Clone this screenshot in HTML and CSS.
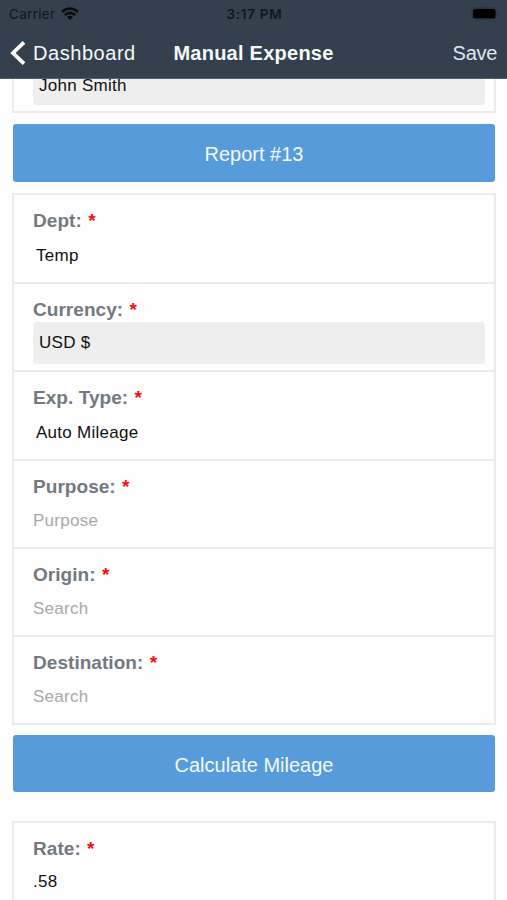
FILE: index.html
```html
<!DOCTYPE html>
<html lang="en">
<head>
<meta charset="utf-8">
<title>Manual Expense</title>
<link rel="stylesheet" href="styles.css">
</head>
<body>
<header class="header">
  <div class="status">
    <div class="carrier"><span>Carrier</span>
      <svg class="wifi" width="18" height="13" viewBox="0 0 18 13" fill="none" stroke="#080c10" stroke-width="2.6"><path d="M1 4.9Q9-1.9 17 4.9M3.8 8Q9 3.6 14.2 8"/><path d="M6 10Q9 7.6 12 10L9 12.9Z" fill="#080c10" stroke="none"/></svg>
    </div>
    <div class="time">3:17 PM</div>
    <svg class="battery" width="29" height="14" viewBox="0 0 29 14"><rect x=".5" y=".5" width="25" height="12" rx="4" fill="#293541" stroke="#2a3641"/><rect x="2" y="2" width="22.5" height="9.2" rx="2.5" fill="#000"/><path d="M27 4.5q1.8 2.2 0 4.2z" fill="#25303b"/></svg>
  </div>
  <nav class="nav">
    <a class="back"><svg width="16" height="24" viewBox="0 0 16 24" fill="none" stroke="#fff" stroke-width="3.8"><path d="M14 1.4 3 12 14 22.6"/></svg><span>Dashboard</span></a>
    <h1 class="title">Manual Expense</h1>
    <a class="save">Save</a>
  </nav>
</header>
<main class="content">
  <section class="card card-clipped">
    <div class="value filled">John Smith</div>
  </section>
  <button class="button">Report #13</button>
  <section class="card">
    <div class="row tall"><div class="label">Dept: <b>*</b></div><div class="value select">Temp</div></div>
    <div class="row"><div class="label">Currency: <b>*</b></div><div class="value filled">USD $</div></div>
    <div class="row tall"><div class="label">Exp. Type: <b>*</b></div><div class="value select">Auto Mileage</div></div>
    <div class="row"><div class="label">Purpose: <b>*</b></div><div class="value placeholder">Purpose</div></div>
    <div class="row"><div class="label">Origin: <b>*</b></div><div class="value placeholder">Search</div></div>
    <div class="row"><div class="label">Destination: <b>*</b></div><div class="value placeholder">Search</div></div>
  </section>
  <button class="button">Calculate Mileage</button>
  <section class="card card-rate">
    <div class="row"><div class="label">Rate: <b>*</b></div><div class="value">.58</div></div>
  </section>
</main>
</body>
</html>
```
FILE: styles.css
```css
* { box-sizing: border-box; }
body {
  margin: 0;
  height: 900px;
  overflow: hidden;
  background: #fefefe;
  color: #111;
  font-family: "Liberation Sans", Arial, sans-serif;
}
.header {
  height: 79px;
  background: #34404d;
  border-bottom: 1px solid #51606d;
}
.status {
  display: grid;
  grid-template-columns: 1fr auto 1fr;
  align-items: center;
  height: 27px;
  padding: 1px 7px 0 9px;
  font: 400 13.5px/26px Inter, sans-serif;
  color: #10161d;
}
.carrier { display: flex; align-items: center; gap: 6px; letter-spacing: .3px; }
.wifi { margin-top: -2px; }
.time { font-weight: 600; letter-spacing: .7px; }
.battery { justify-self: end; margin-top: -1px; }
.nav {
  display: grid;
  grid-template-columns: 1fr auto 1fr;
  align-items: center;
  height: 51px;
  padding: 0 10px;
  font-size: 20px;
  color: #f5f9fb;
}
.nav span, .title, .save { padding-top: 1px; }
.back { display: flex; align-items: center; gap: 7px; letter-spacing: .55px; }
.title { margin: 0; font-size: 20px; font-weight: 700; letter-spacing: .25px; }
.save { justify-self: end; letter-spacing: -.3px; color: #dfe7ec; }
.content { display: flex; flex-direction: column; padding: 0 12px; }
.card { width: 484px; border: 2px solid #ebebeb; margin-bottom: 11px; }
.card-clipped {
  display: flex;
  flex-direction: column;
  justify-content: flex-end;
  height: 34px;
  padding: 0 9px 6px 19px;
  overflow: hidden;
  border-top: 0;
}
.card-clipped .filled { flex: none; line-height: 45px; }
.button {
  width: 482px;
  height: 58px;
  margin: 0 0 11px 1px;
  padding: 3px 0 0;
  border: 0;
  border-radius: 3px;
  background: #579bdb;
  color: #f2faff;
  font: 20px "Liberation Sans", Arial, sans-serif;
}
.row { height: 88px; padding: 14px 9px 0 19px; border-bottom: 2px solid #ebebeb; }
.row.tall { height: 89px; }
.row:last-child { height: 86px; border-bottom: 0; }
.label { font-size: 19px; line-height: 24px; font-weight: 700; color: #727980; letter-spacing: .05px; }
.label b { margin-left: 1px; color: #f21111; }
.value { padding-top: 10px; font-size: 17px; line-height: 24px; letter-spacing: .27px; }
.select { padding: 11px 0 0 3px; }
.filled {
  height: 42px;
  padding: 0 6px;
  border-radius: 3px;
  background: #eee;
  line-height: 42px;
}
.placeholder { color: #a9a9a9; }
.card + .button + .card-rate { margin-top: 17px; }
.card-rate .value { padding-top: 9px; }
.card:nth-of-type(2) + .button { height: 57px; margin-top: -1px; margin-bottom: 12px; }
```
